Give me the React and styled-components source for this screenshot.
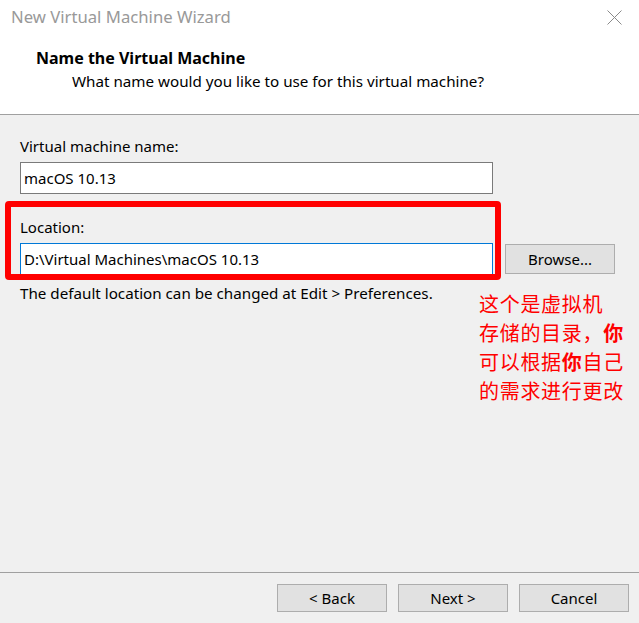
import React from "react";
import styled, { createGlobalStyle } from "styled-components";

const Global = createGlobalStyle`
  html, body { margin: 0; padding: 0; background: #f0f0f0; }
  body { font-family: "Noto Sans", "Open Sans", sans-serif; }
  * { box-sizing: border-box; }
`;

const Window = styled.div`
  position: relative;
  width: 639px;
  height: 623px;
  display: flex;
  flex-direction: column;
  background: #f0f0f0;
  color: #000;
  font-size: 15px;
  overflow: hidden;
`;

const Header = styled.div`
  height: 115px;
  background: #fff;
  border-bottom: 1px solid #a0a0a0;
  display: flex;
  flex-direction: column;
`;

const TitleBar = styled.div`
  height: 34px;
  display: flex;
  align-items: center;
  justify-content: space-between;
  padding: 0 17px 0 11px;
`;

const TitleText = styled.div`
  color: #999;
  font-size: 16.7px;
  line-height: 20px;
`;

const Heading = styled.div`
  margin-top: 14px;
  padding-left: 36px;
  font-weight: 700;
  font-size: 16px;
  line-height: 20px;
`;

const SubHeading = styled.div`
  margin-top: 3px;
  padding-left: 72px;
  font-size: 15.2px;
  line-height: 20px;
`;

const Body = styled.div`
  flex: 1;
  padding: 21px 24px 0 20px;
  display: flex;
  flex-direction: column;
`;

const Label = styled.div`
  line-height: 20px;
  margin-top: ${(p) => p.$top || 0}px;
`;

const Row = styled.div`
  display: flex;
  align-items: center;
  gap: 12px;
  margin-top: 6px;
`;

const Input = styled.div`
  width: 473px;
  height: 32px;
  margin-top: ${(p) => p.$top || 0}px;
  background: #fff;
  border: 1px solid ${(p) => (p.$focus ? "#0078d7" : "#7a7a7a")};
  display: flex;
  align-items: center;
  padding-left: 3px;
  white-space: nowrap;
`;

const Button = styled.div`
  width: 110px;
  height: ${(p) => p.$h || 28}px;
  background: #e1e1e1;
  border: 1px solid #adadad;
  display: flex;
  align-items: center;
  justify-content: center;
  line-height: 20px;
`;

const Hint = styled.div`
  margin-top: 8px;
  line-height: 20px;
  font-size: 15.2px;
`;

const Footer = styled.div`
  border-top: 1px solid #a0a0a0;
  padding: 11px 10px 11px 0;
  display: flex;
  justify-content: flex-end;
  gap: 11px;
`;

const Highlight = styled.div`
  position: absolute;
  left: 5px;
  top: 201px;
  width: 496px;
  height: 79px;
  border: 6px solid #ff0000;
  border-radius: 4px;
  pointer-events: none;
`;

const Note = styled.div`
  position: absolute;
  left: 479px;
  top: 289px;
  color: #ff0000;
  font-family: "Noto Sans CJK SC", sans-serif;
  font-size: 20px;
  line-height: 29px;
  letter-spacing: 0.7px;
  white-space: nowrap;
  b { font-weight: 700; }
`;

const CloseIcon = () => (
  <svg width="15" height="15" viewBox="0 0 15 15">
    <path d="M0.5 0.5 L14.5 14.5 M14.5 0.5 L0.5 14.5" stroke="#8a8a8a" strokeWidth="1" fill="none" />
  </svg>
);

export default function App() {
  return (
    <Window>
      <Global />
      <Header>
        <TitleBar>
          <TitleText>New Virtual Machine Wizard</TitleText>
          <CloseIcon />
        </TitleBar>
        <Heading>Name the Virtual Machine</Heading>
        <SubHeading>What name would you like to use for this virtual machine?</SubHeading>
      </Header>
      <Body>
        <Label>Virtual machine name:</Label>
        <Input $top={6}>macOS 10.13</Input>
        <Label $top={23}>Location:</Label>
        <Row>
          <Input $focus>D:\Virtual Machines\macOS 10.13</Input>
          <Button $h={30}>Browse...</Button>
        </Row>
        <Hint>The default location can be changed at Edit &gt; Preferences.</Hint>
      </Body>
      <Footer>
        <Button>&lt; Back</Button>
        <Button>Next &gt;</Button>
        <Button>Cancel</Button>
      </Footer>
      <Highlight />
      <Note>
        这个是虚拟机<br />
        存储的目录，<b>你</b><br />
        可以根据<b>你</b>自己<br />
        的需求进行更改
      </Note>
    </Window>
  );
}
